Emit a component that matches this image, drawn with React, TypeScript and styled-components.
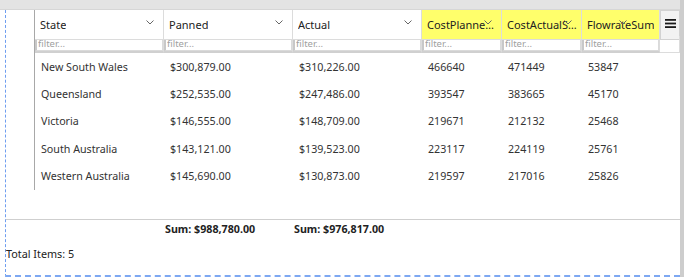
import styled, { createGlobalStyle } from "styled-components";

const GlobalStyle = createGlobalStyle`
    html, body {
        margin: 0;
        padding: 0;
        background: #ffffff;
    }

    body {
        font-family: "Noto Sans", "Open Sans", sans-serif;
        color: #333333;
    }
`;

const COLUMNS = "29px 129px 129px 129px 80px 80px 78px 20px";

const Page = styled.div`
    display: flex;
    width: 684px;
    height: 277px;
    overflow: hidden;
`;

const Main = styled.div`
    flex: 1;
    display: flex;
    flex-direction: column;
`;

const ScrollTrack = styled.div`
    width: 4px;
    background: #cdcdcd;
`;

const TopBar = styled.div`
    height: 10px;
    background: #e3e3e3;
    border-bottom: 1px solid #d6d6d6;
    box-sizing: border-box;
`;

const Frame = styled.div`
    flex: 1;
    margin-left: 5px;
    border-left: 1px dashed #6f9ef0;
    border-bottom: 2px dashed #7ea8f2;
    display: flex;
    flex-direction: column;
`;

const GridRow = styled.div<{ $height: number }>`
    display: grid;
    grid-template-columns: ${COLUMNS};
    height: ${props => props.$height}px;
`;

const RowHead = styled.div`
    border-right: 1px solid #a8a8a8;
`;

const HeaderCell = styled.div<{ $highlight?: boolean; $chevronInset?: number }>`
    position: relative;
    display: flex;
    align-items: center;
    padding: 0 2px 0 5px;
    font-size: 11px;
    color: #222222;
    background: ${props => (props.$highlight ? "#ffff6b" : "#ffffff")};
    border-right: 1px solid #dcdcdc;
    border-bottom: 1px solid #dcdcdc;
    overflow: hidden;

    span.label {
        white-space: nowrap;
        overflow: hidden;
        text-overflow: ellipsis;
    }

    svg {
        position: absolute;
        right: ${props => props.$chevronInset ?? 9}px;
        top: 10px;
    }
`;

const MenuButton = styled.div`
    display: flex;
    align-items: flex-start;
    justify-content: center;
    padding-top: 8px;
    background: #f2f2f2;
    border: 1px solid #d2d2d2;
    height: 30px;
    box-sizing: border-box;
`;

const FilterCell = styled.div`
    display: flex;
    border-right: 1px solid #dcdcdc;
    border-bottom: 2px solid #d0d0d0;
`;

const FilterInput = styled.input`
    flex: 1;
    min-width: 0;
    margin: 0;
    padding: 0 1px;
    border: 1px solid #dadada;
    border-left: 2px solid #c8c8c8;
    font-family: inherit;
    font-size: 9.5px;
    color: #444444;
    outline: none;

    &::placeholder {
        color: #a0a0a0;
    }
`;

const BlankCell = styled.div`
    border-right: 1px solid #dcdcdc;
    border-bottom: 1px solid #dcdcdc;
`;

const Body = styled.div`
    display: flex;
    flex-direction: column;
`;

const DataRow = styled.div`
    display: grid;
    grid-template-columns: ${COLUMNS};
    height: 27.4px;
`;

const DataCell = styled.div`
    display: flex;
    align-items: center;
    padding-left: 6px;
    font-size: 10.7px;
    color: #333333;
    white-space: nowrap;
`;

const Spacer = styled.div`
    height: 29px;
`;

const Footer = styled.div`
    display: grid;
    grid-template-columns: ${COLUMNS};
    height: 19px;
    border-top: 1px solid #cfcfcf;
`;

const SumCell = styled.div`
    display: flex;
    align-items: center;
    padding-left: 1px;
    font-size: 10.7px;
    font-weight: 700;
    color: #222222;
    white-space: nowrap;
`;

const TotalItems = styled.div`
    padding: 7px 0 0;
    font-size: 10.8px;
    color: #222222;
`;

const Chevron = () => (
    <svg width="8" height="5" viewBox="0 0 8 5">
        <polyline points="0.5,0.5 4,4 7.5,0.5" fill="none" stroke="#666666" strokeWidth="1" />
    </svg>
);

const MenuIcon = () => (
    <svg width="11" height="9" viewBox="0 0 11 9">
        <rect x="0" y="0" width="11" height="1.8" fill="#1a1a1a" />
        <rect x="0" y="3.6" width="11" height="1.8" fill="#1a1a1a" />
        <rect x="0" y="7.2" width="11" height="1.8" fill="#1a1a1a" />
    </svg>
);

type Row = {
    state: string;
    planned: string;
    actual: string;
    costPlanned: number;
    costActual: number;
    flowrate: number;
};

const rows: Row[] = [
    { state: "New South Wales", planned: "$300,879.00", actual: "$310,226.00", costPlanned: 466640, costActual: 471449, flowrate: 53847 },
    { state: "Queensland", planned: "$252,535.00", actual: "$247,486.00", costPlanned: 393547, costActual: 383665, flowrate: 45170 },
    { state: "Victoria", planned: "$146,555.00", actual: "$148,709.00", costPlanned: 219671, costActual: 212132, flowrate: 25468 },
    { state: "South Australia", planned: "$143,121.00", actual: "$139,523.00", costPlanned: 223117, costActual: 224119, flowrate: 25761 },
    { state: "Western Australia", planned: "$145,690.00", actual: "$130,873.00", costPlanned: 219597, costActual: 217016, flowrate: 25826 },
];

const headers = [
    { label: "State" },
    { label: "Panned" },
    { label: "Actual" },
    { label: "CostPlannedSum", highlight: true },
    { label: "CostActualSum", highlight: true },
    { label: "FlowrateSum", highlight: true, inset: 32 },
];

const App: React.FC = () => {
    return (
        <>
            <GlobalStyle />
            <Page>
                <Main>
                    <TopBar />
                    <Frame>
                        <GridRow $height={26}>
                            <RowHead />
                            {headers.map(h => (
                                <HeaderCell key={h.label} $highlight={h.highlight} $chevronInset={h.inset}>
                                    <span className="label">{h.label}</span>
                                    <Chevron />
                                </HeaderCell>
                            ))}
                            <MenuButton>
                                <MenuIcon />
                            </MenuButton>
                        </GridRow>
                        <GridRow $height={17}>
                            <RowHead />
                            {headers.map(h => (
                                <FilterCell key={h.label}>
                                    <FilterInput placeholder="filter..." />
                                </FilterCell>
                            ))}
                            <BlankCell />
                        </GridRow>
                        <Body>
                            {rows.map(r => (
                                <DataRow key={r.state}>
                                    <RowHead />
                                    <DataCell>{r.state}</DataCell>
                                    <DataCell>{r.planned}</DataCell>
                                    <DataCell>{r.actual}</DataCell>
                                    <DataCell>{r.costPlanned}</DataCell>
                                    <DataCell>{r.costActual}</DataCell>
                                    <DataCell>{r.flowrate}</DataCell>
                                    <div />
                                </DataRow>
                            ))}
                        </Body>
                        <Spacer />
                        <Footer>
                            <div />
                            <div />
                            <SumCell>Sum: $988,780.00</SumCell>
                            <SumCell>Sum: $976,817.00</SumCell>
                        </Footer>
                        <TotalItems>Total Items: 5</TotalItems>
                    </Frame>
                </Main>
                <ScrollTrack />
            </Page>
        </>
    );
};

export default App;
